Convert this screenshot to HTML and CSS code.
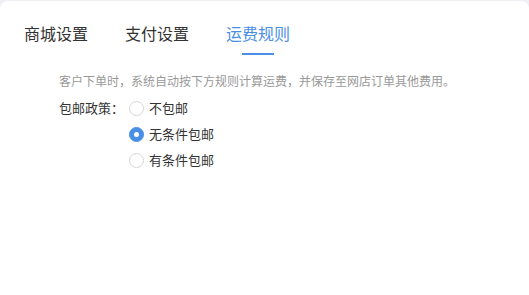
FILE: index.html
```html
<!DOCTYPE html>
<html lang="zh">
<head>
<meta charset="utf-8">
<link rel="stylesheet" href="styles.css">
</head>
<body>
<div class="card">
  <div class="tabs">
    <div class="tab">商城设置</div>
    <div class="tab">支付设置</div>
    <div class="tab active">运费规则</div>
  </div>
  <p class="desc">客户下单时，系统自动按下方规则计算运费，并保存至网店订单其他费用。</p>
  <div class="policy">
    <div class="policy-label">包邮政策：</div>
    <div class="options">
      <div class="option"><span class="radio"></span><span>不包邮</span></div>
      <div class="option"><span class="radio checked"></span><span>无条件包邮</span></div>
      <div class="option"><span class="radio"></span><span>有条件包邮</span></div>
    </div>
  </div>
</div>
</body>
</html>
```
FILE: styles.css
```css
html, body {
  margin: 0;
  padding: 0;
}
body {
  background: #eef0f4;
  font-family: "Noto Sans CJK SC", "Noto Sans", sans-serif;
  color: #333;
}
.card {
  margin-top: 1px;
  height: 294px;
  background: #fff;
  border-radius: 8px 8px 0 0;
  box-sizing: border-box;
}
.tabs {
  display: flex;
  gap: 37px;
  padding: 20px 0 0 24px;
}
.tab {
  position: relative;
  font-size: 16px;
  line-height: 24px;
  padding-bottom: 10px;
  color: #333;
}
.tab.active {
  color: #4a8fe6;
}
.tab.active::after {
  content: "";
  position: absolute;
  left: 50%;
  bottom: 0;
  width: 32px;
  height: 2px;
  margin-left: -16px;
  background: #4a8fe6;
}
.desc {
  margin: 17px 0 0 59px;
  font-size: 12px;
  line-height: 18px;
  color: #999;
}
.policy {
  display: flex;
  margin: 5px 0 0 59px;
  font-size: 13px;
  line-height: 26px;
}
.policy-label {
  width: 70px;
}
.options {
  display: flex;
  flex-direction: column;
}
.option {
  display: flex;
  align-items: center;
  gap: 5px;
}
.radio {
  width: 15px;
  height: 15px;
  border: 1px solid #d6d6d6;
  border-radius: 50%;
  box-sizing: border-box;
  background: #fff;
  position: relative;
}
.radio.checked {
  background: #4a8fe6;
  border-color: #4a8fe6;
}
.radio.checked::after {
  content: "";
  position: absolute;
  left: 50%;
  top: 50%;
  width: 5px;
  height: 5px;
  margin: -2.5px 0 0 -2.5px;
  border-radius: 50%;
  background: #fff;
}
```
